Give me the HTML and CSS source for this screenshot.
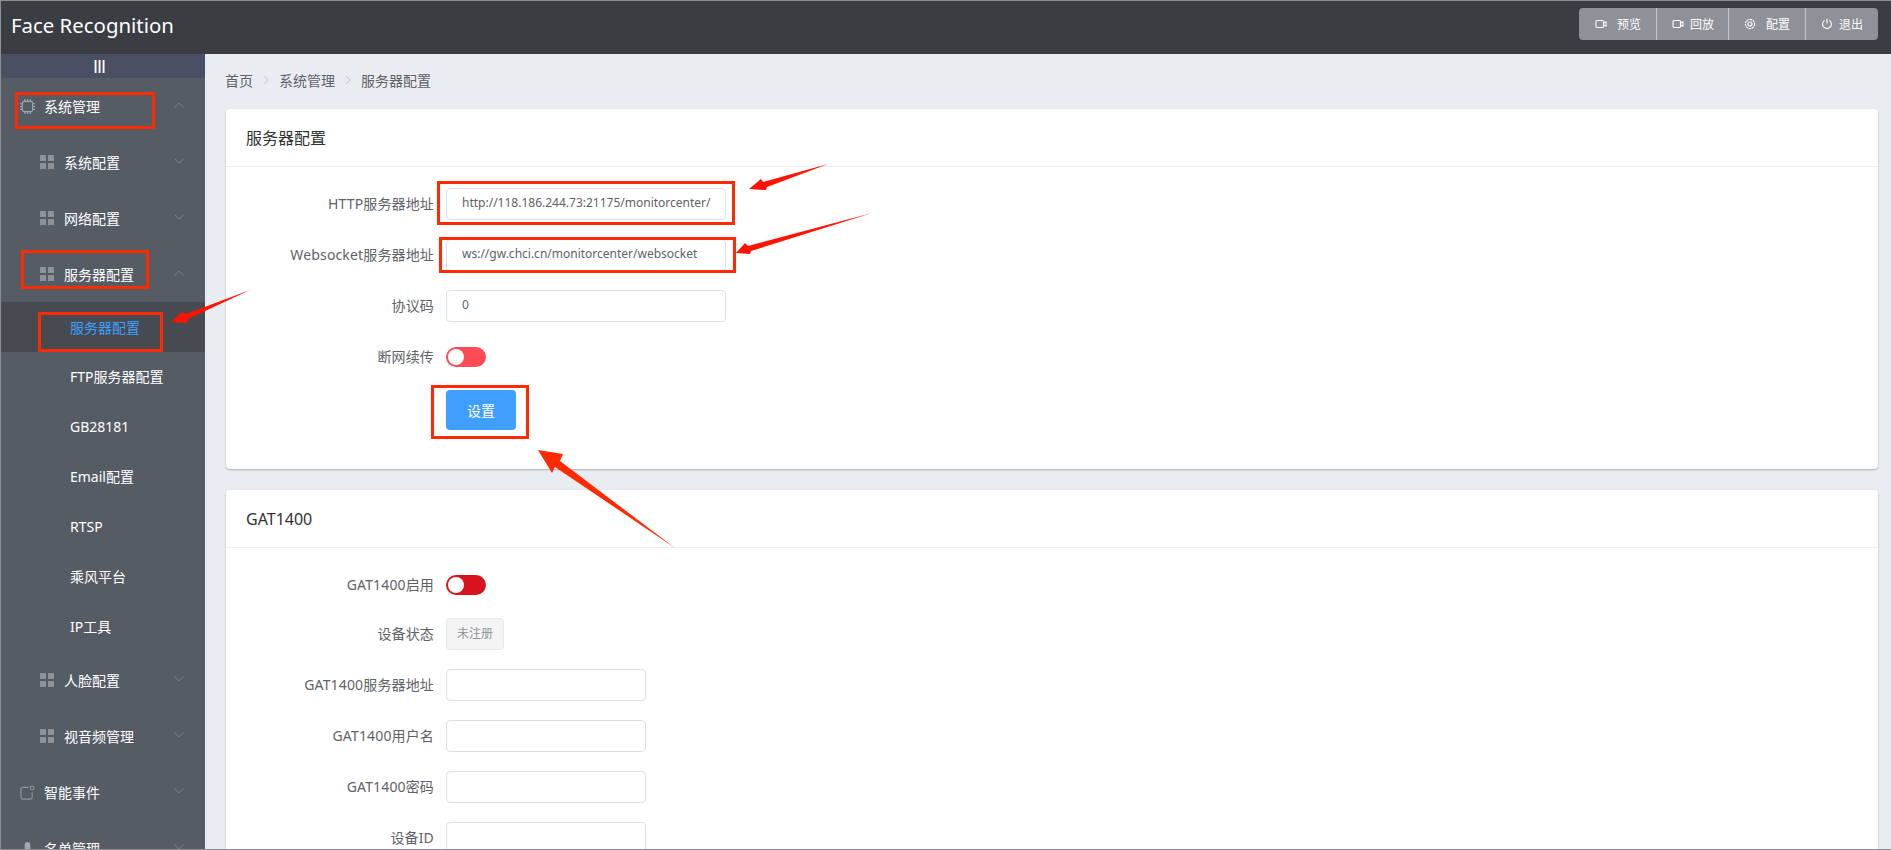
FILE: index.html
```html
<!DOCTYPE html>
<html lang="zh-CN">
<head>
<meta charset="utf-8">
<title>Face Recognition</title>
<link rel="stylesheet" href="styles.css">
</head>
<body>
<div class="app">
  <header class="topbar">
    <div class="brand">Face Recognition</div>
    <div class="actions">
      <div class="action gap-10"><svg class="action-icon" viewBox="0 0 12 10"><rect x="1" y="1.5" width="7.5" height="7" rx="1"/><path d="M8.5 4 11 2.8v4.4L8.5 6"/></svg><span>预览</span></div>
      <div class="action gap-6 tight"><svg class="action-icon" viewBox="0 0 12 10"><rect x="1" y="1.5" width="7.5" height="7" rx="1"/><path d="M8.5 4 11 2.8v4.4L8.5 6"/></svg><span>回放</span></div>
      <div class="action gap-10"><svg class="action-icon" viewBox="0 0 12 12"><circle cx="6" cy="6" r="2"/><circle cx="6" cy="6" r="4.6" stroke-dasharray="2.4 .6"/></svg><span>配置</span></div>
      <div class="action gap-6"><svg class="action-icon" viewBox="0 0 12 12"><path d="M3.6 2.4a4.4 4.4 0 1 0 4.8 0M6 .8v4.6"/></svg><span>退出</span></div>
    </div>
  </header>
  <div class="layout">
    <aside class="sidebar">
      <div class="collapse">III</div>
      <nav>
        <div class="item top"><svg class="top-icon chip" viewBox="0 0 16 16"><rect x="2.500" y="2.500" width="11" height="11" rx="2"/><path d="M5 0v2.500M8 0v2.500M11 0v2.500M5 13.500V16M8 13.500V16M11 13.500V16M0 5h2.500M0 8h2.500M0 11h2.500M13.500 5H16M13.500 8H16M13.500 11H16"/></svg><span>系统管理</span><svg class="chev" viewBox="0 0 10 6"><path d="M.5 5.500 5 .8l4.500 4.700"/></svg></div>
        <div class="item sub"><svg class="grid" viewBox="0 0 14 14"><rect width="6" height="6" rx=".6"/><rect x="8" width="6" height="6" rx=".6"/><rect y="8" width="6" height="6" rx=".6"/><rect x="8" y="8" width="6" height="6" rx=".6"/></svg><span>系统配置</span><svg class="chev" viewBox="0 0 10 6"><path d="M.5.500 5 5.200 9.500.5"/></svg></div>
        <div class="item sub"><svg class="grid" viewBox="0 0 14 14"><rect width="6" height="6" rx=".6"/><rect x="8" width="6" height="6" rx=".6"/><rect y="8" width="6" height="6" rx=".6"/><rect x="8" y="8" width="6" height="6" rx=".6"/></svg><span>网络配置</span><svg class="chev" viewBox="0 0 10 6"><path d="M.5.500 5 5.200 9.500.5"/></svg></div>
        <div class="item sub"><svg class="grid" viewBox="0 0 14 14"><rect width="6" height="6" rx=".6"/><rect x="8" width="6" height="6" rx=".6"/><rect y="8" width="6" height="6" rx=".6"/><rect x="8" y="8" width="6" height="6" rx=".6"/></svg><span>服务器配置</span><svg class="chev" viewBox="0 0 10 6"><path d="M.5 5.500 5 .8l4.500 4.700"/></svg></div>
        <div class="leaf active">服务器配置</div>
        <div class="leaf">FTP服务器配置</div>
        <div class="leaf">GB28181</div>
        <div class="leaf">Email配置</div>
        <div class="leaf">RTSP</div>
        <div class="leaf">乘风平台</div>
        <div class="leaf">IP工具</div>
        <div class="item sub"><svg class="grid" viewBox="0 0 14 14"><rect width="6" height="6" rx=".6"/><rect x="8" width="6" height="6" rx=".6"/><rect y="8" width="6" height="6" rx=".6"/><rect x="8" y="8" width="6" height="6" rx=".6"/></svg><span>人脸配置</span><svg class="chev" viewBox="0 0 10 6"><path d="M.5.500 5 5.200 9.500.5"/></svg></div>
        <div class="item sub"><svg class="grid" viewBox="0 0 14 14"><rect width="6" height="6" rx=".6"/><rect x="8" width="6" height="6" rx=".6"/><rect y="8" width="6" height="6" rx=".6"/><rect x="8" y="8" width="6" height="6" rx=".6"/></svg><span>视音频管理</span><svg class="chev" viewBox="0 0 10 6"><path d="M.5.500 5 5.200 9.500.5"/></svg></div>
        <div class="item top"><svg class="top-icon" viewBox="0 0 16 16"><path d="M9 2.500H3a2 2 0 0 0-2 2V13a2 2 0 0 0 2 2h8a2 2 0 0 0 2-2V8"/><circle cx="13" cy="3" r="2"/></svg><span>智能事件</span><svg class="chev" viewBox="0 0 10 6"><path d="M.5.500 5 5.200 9.500.5"/></svg></div>
        <div class="item top"><svg class="top-icon solid" viewBox="0 0 16 16"><rect x="5" y="1" width="6" height="14" rx="3"/></svg><span>名单管理</span><svg class="chev" viewBox="0 0 10 6"><path d="M.5.500 5 5.200 9.500.5"/></svg></div>
      </nav>
    </aside>
    <main class="main">
      <div class="crumbs">
        <span>首页</span><svg class="crumb-sep" viewBox="0 0 6 10"><path d="M.7.700 5.200 5 .7 9.300"/></svg>
        <span>系统管理</span><svg class="crumb-sep" viewBox="0 0 6 10"><path d="M.7.700 5.200 5 .7 9.300"/></svg>
        <span>服务器配置</span>
      </div>
      <section class="card">
        <h2 class="card-title">服务器配置</h2>
        <div class="card-body">
          <div class="row"><label class="label">HTTP服务器地址</label><div class="input wide">http://118.186.244.73:21175/monitorcenter/</div></div>
          <div class="row"><label class="label">Websocket服务器地址</label><div class="input wide">ws://gw.chci.cn/monitorcenter/websocket</div></div>
          <div class="row"><label class="label">协议码</label><div class="input wide">0</div></div>
          <div class="row switch-row lowered"><label class="label">断网续传</label><div class="switch light"><i class="knob"></i></div></div>
          <div class="row button-row"><button class="primary">设置</button></div>
        </div>
      </section>
      <section class="card">
        <h2 class="card-title">GAT1400</h2>
        <div class="card-body second">
          <div class="row switch-row"><label class="label">GAT1400启用</label><div class="switch dark"><i class="knob"></i></div></div>
          <div class="row"><label class="label">设备状态</label><div class="tag">未注册</div></div>
          <div class="row"><label class="label">GAT1400服务器地址</label><div class="input narrow"></div></div>
          <div class="row"><label class="label">GAT1400用户名</label><div class="input narrow"></div></div>
          <div class="row"><label class="label">GAT1400密码</label><div class="input narrow"></div></div>
          <div class="row"><label class="label">设备ID</label><div class="input narrow"></div></div>
        </div>
      </section>
    </main>
  </div>
  <svg class="annotations" viewBox="0 0 1891 850">
    <rect x="16.500" y="93.500" width="137" height="34"/>
    <rect x="22.500" y="251.500" width="125" height="36"/>
    <rect x="39.500" y="313.500" width="122" height="37"/>
    <rect x="438.500" y="182.500" width="295" height="41"/>
    <rect x="440.500" y="238.500" width="294" height="33"/>
    <rect x="432.500" y="386.500" width="95" height="51"/>
    <polygon points="250,290 186,314 182,312 171,322 187,323 188,319"/>
    <polygon points="828,164 763,182 761,179 749,189 766,190 767,187"/>
    <polygon points="872,213 748,246 745,243 736,253 750,254 751,251"/>
    <polygon class="orange" points="538,450 563,454 560,461 675,548 555,467 552,473"/>
  </svg>
</div>
</body>
</html>
```
FILE: styles.css
```css
* { box-sizing: border-box; }
html, body { margin: 0; height: 850px; overflow: hidden; }
body { font-family: "Noto Sans", "Noto Sans CJK SC", sans-serif; font-size: 14px; color: #606266; }

.app { position: relative; width: 1891px; height: 850px; display: flex; flex-direction: column; overflow: hidden; }
.app::after { content: ""; position: absolute; inset: 0; border: solid #8b8f94; border-width: 1px 0 1px 1px; pointer-events: none; }

.topbar { height: 54px; flex: none; background: #3a3e42; display: flex; align-items: flex-start; justify-content: space-between; padding: 8px 13px 0 11px; }
.brand { color: #fff; font-size: 20.4px; line-height: 32px; margin-top: 1px; }
.actions { display: flex; height: 32px; background: #8e9197; border-radius: 4px; color: #fff; font-size: 12px; }
.action { display: flex; align-items: center; padding: 0 15px; border-left: 1px solid #c4c6c9; }
.action:first-child { border-left: 0; padding-left: 16px; }
.action.tight { padding-right: 14px; }
.gap-10 { gap: 10px; }
.gap-6 { gap: 6px; }
.action-icon { width: 12px; height: 12px; fill: none; stroke: #fff; stroke-width: 1.1; }

.layout { flex: 1; display: flex; min-height: 0; }
.sidebar { width: 205px; flex: none; background: #555c64; color: #fff; overflow: hidden; }
.collapse { height: 24px; background: #4a4f63; font: 18px/26px "Liberation Sans", sans-serif; text-align: center; letter-spacing: -1px; padding-right: 7px; color: #fff; }
.item { height: 56px; display: flex; align-items: center; position: relative; }
.item.top { padding-left: 20px; gap: 9px; }
.item.sub { padding-left: 40px; gap: 10px; }
.leaf { height: 50px; line-height: 50px; padding-left: 70px; }
.leaf.active { background: #454b51; color: #409eff; line-height: 52px; }
.top-icon { width: 15px; height: 15px; fill: none; stroke: #8f959b; stroke-width: 1.2; }
.top-icon.chip { stroke: #a2a6ab; }
.top-icon.solid { fill: #a4a8ad; stroke: none; }
.grid { width: 14px; height: 14px; fill: #8f9296; }
.chev { position: absolute; right: 21px; top: 24px; width: 10px; height: 6px; fill: none; stroke: #7f858b; stroke-width: 1; }

.main { flex: 1; min-width: 0; background: #e9edf2; padding: 0 13px 0 21px; overflow: hidden; }
.crumbs { height: 55px; display: flex; align-items: center; gap: 10px; padding-bottom: 3px; margin-left: -1px; }
.crumb-sep { width: 6px; height: 10px; fill: none; stroke: #c0c4cc; stroke-width: 1; }

.card { background: #fff; border-radius: 4px; box-shadow: 0 1px 2px rgba(90, 95, 120, .45); margin-bottom: 21px; }
.card-title { margin: 0; height: 58px; padding: 0 20px; border-bottom: 1px solid #eceef4; font-size: 16px; font-weight: 400; line-height: 58px; color: #303133; }
.card-body { padding: 21px 0 39px; }
.card-body.second { padding-top: 22px; }

.row { display: flex; align-items: center; height: 32px; margin-bottom: 19px; }
.switch-row { height: 30px; margin-bottom: 18px; }
.switch-row.lowered { margin-top: 20px; }
.button-row { height: 40px; margin: 0; padding-left: 220px; }
.label { width: 220px; flex: none; padding-right: 12px; text-align: right; color: #606266; margin-top: -3px; letter-spacing: .15px; }
.input { height: 32px; border: 1px solid #dcdfe6; border-radius: 4px; padding: 0 15px; font-size: 12px; line-height: 28px; color: #606266; background: #fff; }
.input.wide { width: 280px; }
.input.narrow { width: 200px; }
.tag { width: 58px; height: 32px; background: #f4f4f5; border: 1px solid #e9e9eb; border-radius: 4px; color: #909399; font-size: 12px; line-height: 30px; text-align: center; }
.switch { width: 40px; height: 20px; border-radius: 10px; position: relative; }
.switch.light { background: #ff4b55; }
.switch.dark { background: #d7141e; }
.knob { position: absolute; left: 2px; top: 2px; width: 16px; height: 16px; border-radius: 50%; background: #fff; }
.primary { width: 70px; height: 40px; border: 0; border-radius: 4px; background: #409eff; color: #fff; font: inherit; font-size: 14px; }

.annotations { position: absolute; left: 0; top: 0; width: 1891px; height: 850px; pointer-events: none; }
.annotations rect { fill: none; stroke: #ff2a00; stroke-width: 3; }
.annotations polygon { fill: #ff1200; }
.annotations polygon.orange { fill: #ff2a00; }
```
